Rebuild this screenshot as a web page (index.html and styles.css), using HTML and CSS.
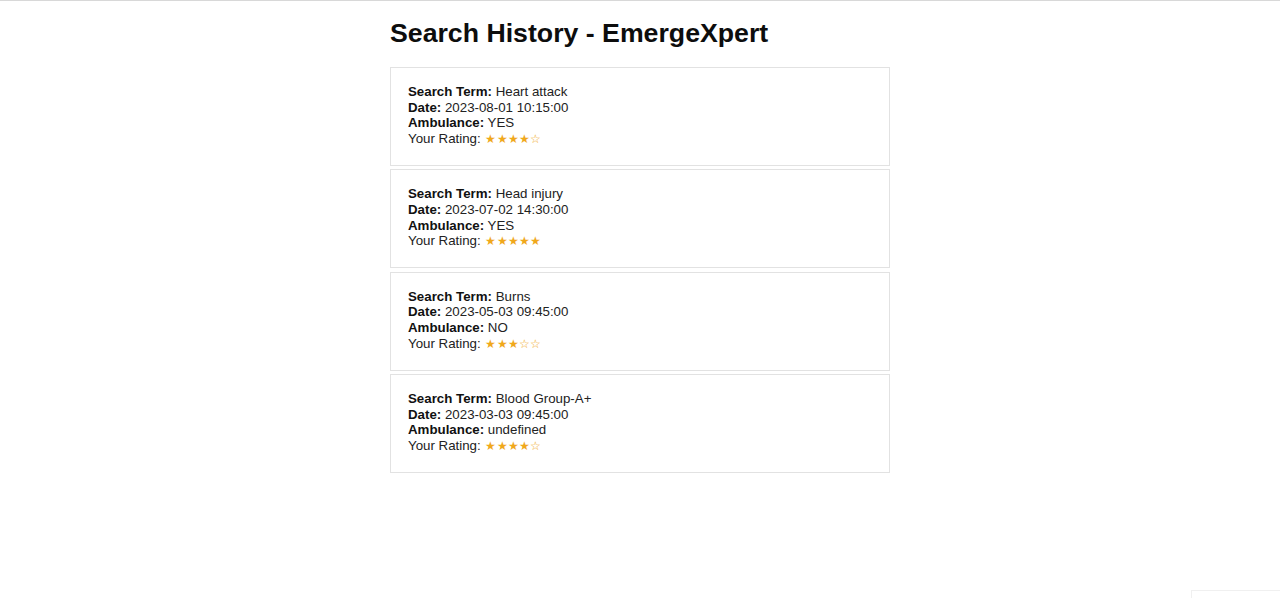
FILE: index.html
```html
<!DOCTYPE html>
<html>
<head>
<meta charset="utf-8">
<link rel="stylesheet" href="styles.css">
</head>
<body>
<div class="topline"></div>
<main class="page">
  <h1 class="title">Search History - EmergeXpert</h1>
  <div class="list">
    <div class="card">
      <div class="row"><b>Search Term:</b> Heart attack</div>
      <div class="row"><b>Date:</b> 2023-08-01 10:15:00</div>
      <div class="row"><b>Ambulance:</b> YES</div>
      <div class="row">Your Rating: <span class="stars">★★★★☆</span></div>
    </div>
    <div class="card">
      <div class="row"><b>Search Term:</b> Head injury</div>
      <div class="row"><b>Date:</b> 2023-07-02 14:30:00</div>
      <div class="row"><b>Ambulance:</b> YES</div>
      <div class="row">Your Rating: <span class="stars">★★★★★</span></div>
    </div>
    <div class="card">
      <div class="row"><b>Search Term:</b> Burns</div>
      <div class="row"><b>Date:</b> 2023-05-03 09:45:00</div>
      <div class="row"><b>Ambulance:</b> NO</div>
      <div class="row">Your Rating: <span class="stars">★★★☆☆</span></div>
    </div>
    <div class="card">
      <div class="row"><b>Search Term:</b> Blood Group-A+</div>
      <div class="row"><b>Date:</b> 2023-03-03 09:45:00</div>
      <div class="row"><b>Ambulance:</b> undefined</div>
      <div class="row">Your Rating: <span class="stars">★★★★☆</span></div>
    </div>
  </div>
</main>
<div class="corner"></div>
</body>
</html>
```
FILE: styles.css
```css
html, body {
  margin: 0;
  padding: 0;
  background: #fff;
}
body {
  font-family: "Liberation Sans", Arial, sans-serif;
  color: #1a1a1a;
  height: 598px;
  overflow: hidden;
}
.topline {
  height: 1px;
  background: #d8d8d8;
}
.page {
  width: 500px;
  margin: 0 auto;
  padding-top: 17px;
}
.title {
  margin: 0 0 19px 0;
  font-size: 26.7px;
  line-height: 30px;
  font-weight: bold;
  color: #0d0d0d;
}
.list {
  display: flex;
  flex-direction: column;
  gap: 3.4px;
}
.card {
  border: 1px solid #e2e2e2;
  padding: 16px 17px 0 17px;
  box-sizing: content-box;
  height: 81px;
}
.row {
  font-size: 13.3px;
  line-height: 15.6px;
  color: #222;
}
.row b {
  color: #111;
}
.stars {
  color: #f0a81c;
  font-size: 12px;
  letter-spacing: 0.2px;
  margin-left: 1px;
}
.corner {
  position: absolute;
  right: 0;
  top: 590px;
  width: 88px;
  height: 10px;
  border-top: 1px solid #f0f0f0;
  border-left: 1px solid #f0f0f0;
}
```
